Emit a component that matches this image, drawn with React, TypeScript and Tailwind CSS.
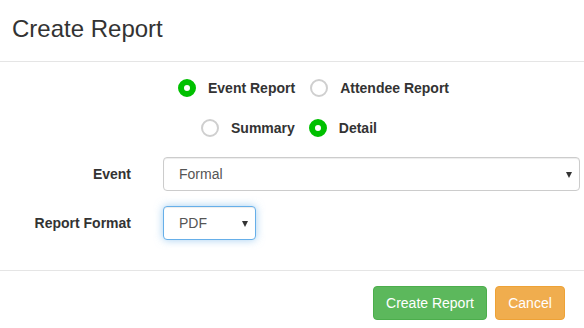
import React from 'react';

function Radio({ checked, label }: { checked: boolean; label: string }) {
  return (
    <label className="flex items-center">
      {checked ? (
        <span className="w-[18px] h-[18px] rounded-full border-[6px] border-[#00c000] bg-white" />
      ) : (
        <span className="w-[18px] h-[18px] rounded-full border-2 border-[#cfcfcf] bg-white" />
      )}
      <span className="ml-[12px] text-[14px] font-bold text-[#333]">{label}</span>
    </label>
  );
}

function SelectBox({ value, width, focused }: { value: string; width: string; focused?: boolean }) {
  return (
    <div
      className={
        'relative h-[34px] rounded-[4px] border bg-white flex items-center pl-[15px] text-[14px] text-[#555] ' +
        width +
        (focused
          ? ' border-[#66afe9] shadow-[inset_0_1px_1px_rgba(0,0,0,0.075),0_0_8px_rgba(102,175,233,0.6)]'
          : ' border-[#ccc] shadow-[inset_0_1px_1px_rgba(0,0,0,0.075)]')
      }
    >
      {value}
      <span className="absolute right-[7px] top-[14px] w-0 h-0 border-l-[3.5px] border-r-[3.5px] border-t-[6px] border-l-transparent border-r-transparent border-t-[#333]" />
    </div>
  );
}

export default function App() {
  return (
    <div className="w-[584px] h-[328px] bg-white overflow-hidden font-['Liberation_Sans',Arial,sans-serif] text-[#333]">
      <div className="h-[62px] border-b border-[#e5e5e5] pl-[12px] pt-[15px]">
        <h4 className="text-[24px] leading-[28px] text-[#333]">Create Report</h4>
      </div>

      <div className="mt-[16px] pl-[178px] flex items-center h-[20px]">
        <Radio checked label="Event Report" />
        <div className="ml-[15px]">
          <Radio checked={false} label="Attendee Report" />
        </div>
      </div>

      <div className="mt-[20px] pl-[201px] flex items-center h-[20px]">
        <Radio checked={false} label="Summary" />
        <div className="ml-[14px]">
          <Radio checked label="Detail" />
        </div>
      </div>

      <div className="mt-[19px] flex items-center">
        <div className="w-[131px] text-right text-[14px] font-bold">Event</div>
        <div className="ml-[32px]">
          <SelectBox value="Formal" width="w-[417px]" />
        </div>
      </div>

      <div className="mt-[15px] flex items-center">
        <div className="w-[131px] text-right text-[14px] font-bold">Report Format</div>
        <div className="ml-[32px]">
          <SelectBox value="PDF" width="w-[93px]" focused />
        </div>
      </div>

      <div className="mt-[30px] border-t border-[#e5e5e5] pt-[15px] flex justify-end pr-[19px] gap-[8px]">
        <button className="h-[34px] w-[114px] rounded-[4px] border border-[#4cae4c] bg-[#5cb85c] text-white text-[14px]">
          Create Report
        </button>
        <button className="h-[34px] w-[70px] rounded-[4px] border border-[#eea236] bg-[#f0ad4e] text-white text-[14px]">
          Cancel
        </button>
      </div>
    </div>
  );
}
